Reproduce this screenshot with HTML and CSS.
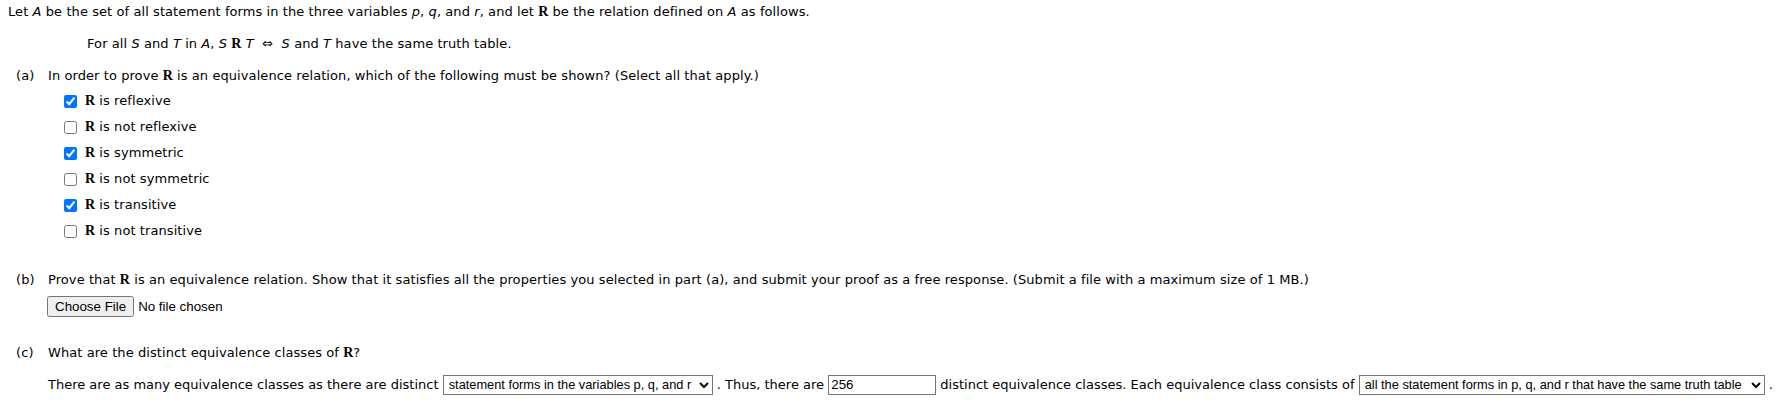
FILE: index.html
```html
<!DOCTYPE html>
<html lang="en">
<head>
<meta charset="utf-8">
<title>Equivalence relation question</title>
<link rel="stylesheet" href="styles.css">
</head>
<body>
<div class="page">
  <p class="intro">Let <i>A</i> be the set of all statement forms in the three variables <i>p</i>, <i>q</i>, and <i>r</i>, and let <b class="rel">R</b> be the relation defined on <i>A</i> as follows.</p>
  <p class="rule">For all <i>S</i> and <i>T</i> in <i>A</i>, <i>S</i> <b class="rel">R</b> <i>T</i> &nbsp;<span class="iff">&#8660;</span>&nbsp; <i>S</i> and <i>T</i> have the same truth table.</p>

  <div class="part part-a">
    <span class="plabel">(a)</span>
    <div class="pbody">
      <p class="q">In order to prove <b class="rel">R</b> is an equivalence relation, which of the following must be shown? (Select all that apply.)</p>
      <ul class="choices">
        <li><label><input type="checkbox" checked><span><b class="rel">R</b> is reflexive</span></label></li>
        <li><label><input type="checkbox"><span><b class="rel">R</b> is not reflexive</span></label></li>
        <li><label><input type="checkbox" checked><span><b class="rel">R</b> is symmetric</span></label></li>
        <li><label><input type="checkbox"><span><b class="rel">R</b> is not symmetric</span></label></li>
        <li><label><input type="checkbox" checked><span><b class="rel">R</b> is transitive</span></label></li>
        <li><label><input type="checkbox"><span><b class="rel">R</b> is not transitive</span></label></li>
      </ul>
    </div>
  </div>

  <div class="part part-b">
    <span class="plabel">(b)</span>
    <div class="pbody">
      <p class="q">Prove that <b class="rel">R</b> is an equivalence relation. Show that it satisfies all the properties you selected in part (a), and submit your proof as a free response. (Submit a file with a maximum size of 1 MB.)</p>
      <div class="upload"><input type="file" class="file"></div>
    </div>
  </div>

  <div class="part part-c">
    <span class="plabel">(c)</span>
    <div class="pbody">
      <p class="q">What are the distinct equivalence classes of <b class="rel">R</b>?</p>
      <p class="answer">There are as many equivalence classes as there are distinct <select class="sel sel-1"><option>statement forms in the variables p, q, and r</option></select> . Thus, there are <input type="text" class="num" value="256"> distinct equivalence classes. Each equivalence class consists of <select class="sel sel-2"><option>all the statement forms in p, q, and r that have the same truth table</option></select> .</p>
    </div>
  </div>
</div>
</body>
</html>
```

FILE: styles.css
```css
html, body {
  margin: 0;
  padding: 0;
  background: #fff;
}

.page {
  padding: 3px 8px 0 8px;
  font-family: "DejaVu Sans", Verdana, sans-serif;
  font-size: 13px;
  line-height: 18px;
  letter-spacing: 0.08px;
  color: #000;
}

p {
  margin: 0;
}

i {
  font-style: italic;
}

.rel {
  font-family: "Liberation Serif", "Times New Roman", serif;
  font-weight: bold;
  font-size: 14px;
  letter-spacing: 0;
}

.iff {
  font-size: 13px;
}

.rule {
  margin-top: 14px;
  padding-left: 79px;
}

.part {
  display: grid;
  grid-template-columns: 32px 1fr;
  padding-left: 8px;
}

.part-a {
  margin-top: 14px;
}

.part-b {
  margin-top: 27px;
}

.part-c {
  margin-top: 27px;
}

.choices {
  list-style: none;
  margin: 3px 0 0 0;
  padding: 0 0 0 16px;
}

.choices li {
  height: 26px;
  padding-top: 4px;
  box-sizing: border-box;
}

.choices label {
  display: flex;
  align-items: center;
  gap: 8px;
}

.choices input {
  margin: 0;
  width: 13px;
  height: 13px;
}

.upload {
  margin-top: 7px;
  display: flex;
}

.file {
  font-family: "Liberation Sans", Arial, sans-serif;
  font-size: 13.33px;
  letter-spacing: normal;
  margin: 0 0 0 -1px;
}

.answer {
  margin-top: 11px;
  line-height: 24px;
  letter-spacing: 0;
  white-space: nowrap;
}

.sel {
  font-family: "Liberation Sans", Arial, sans-serif;
  font-size: 12.8px;
  letter-spacing: normal;
  height: 20px;
  border: 1px solid #767676;
  border-radius: 0;
  background: #fff;
  color: #000;
  padding: 0 0 0 1px;
  margin: 0;
  vertical-align: baseline;
}

.sel-1 {
  width: 270px;
}

.sel-2 {
  width: 406px;
}

.num {
  font-family: "Liberation Sans", Arial, sans-serif;
  font-size: 13.33px;
  letter-spacing: normal;
  width: 108px;
  height: 20px;
  box-sizing: border-box;
  border: 1px solid #767676;
  border-radius: 0;
  padding: 0 2px;
  margin: 0;
  color: #000;
}
```
